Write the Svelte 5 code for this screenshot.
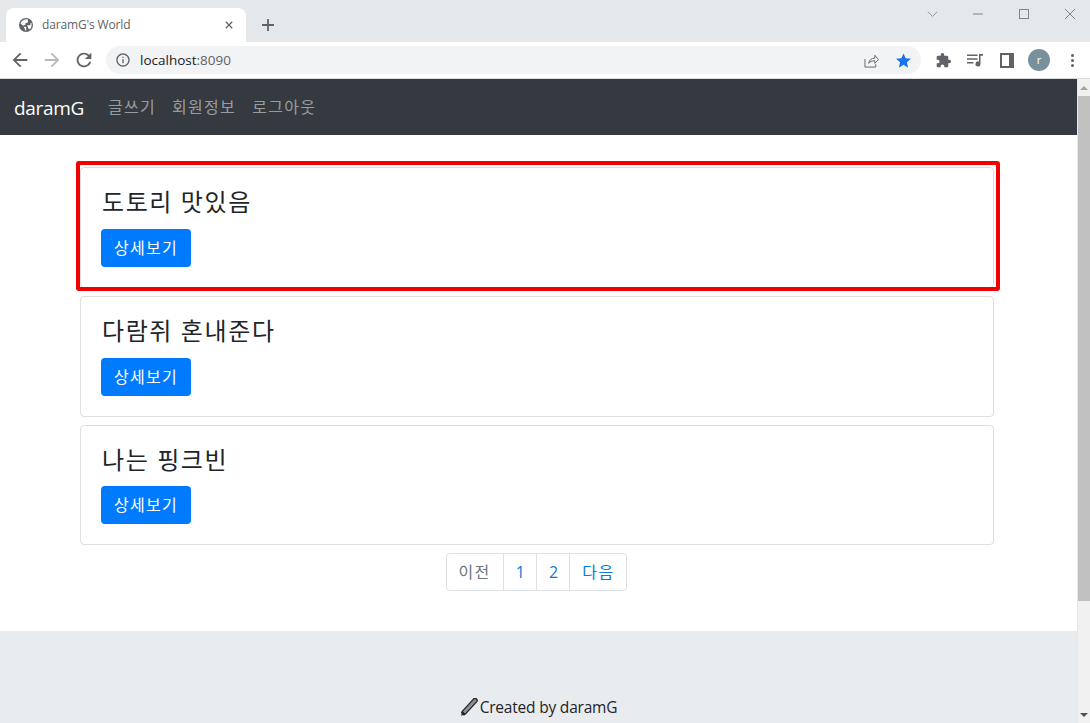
<script lang="ts">
	const posts = ['도토리 맛있음', '다람쥐 혼내준다', '나는 핑크빈'];
	const navLinks = ['글쓰기', '회원정보', '로그아웃'];
</script>

<div class="window">
	<header class="chrome">
		<div class="tabstrip">
			<div class="tab">
				<svg class="favicon" viewBox="0 0 14 14"><circle cx="7" cy="7" r="7" /><path class="land" d="M1.500 5.500L5 8.500v1c0 .6.500 1 1 1v2H7.200V9.500c0-.4-.3-.7-.7-.7H4.500V7h1.300c.4 0 .7-.3.7-.7V5h1.200c.7 0 1.200-.5 1.200-1.200V1.500C7 .9 3 1.500 1.500 5.500z" /><path class="land" d="M10.800 11.500c-.2-.6-.6-.9-1.200-.9H9V9c0-.4-.3-.7-.7-.7H8.200V7.200h2.500c.5 0 .8-.3.8-.8V5h1c.5 2.500-.2 5-1.700 6.500z" /></svg>
				<span class="tab-title">daramG's World</span>
				<svg class="tab-close" viewBox="0 0 10 10"><path d="M1 1l8 8M9 1l-8 8" /></svg>
			</div>
			<svg class="new-tab" viewBox="0 0 12 12"><path d="M6 0v12M0 6h12" /></svg>
			<div class="window-controls">
				<svg class="ctl chevron" viewBox="0 0 12 7"><path d="M.5.8L6 6.200 11.500.8" /></svg>
				<svg class="ctl minimize" viewBox="0 0 10 10"><path d="M0 5h10" /></svg>
				<svg class="ctl maximize" viewBox="0 0 10 10"><rect x=".5" y=".5" width="9" height="9" /></svg>
				<svg class="ctl closer" viewBox="0 0 10 10"><path d="M0 0l10 10M10 0L0 10" /></svg>
			</div>
		</div>
		<div class="toolbar">
			<svg class="tool back" viewBox="0 0 24 24"><path d="M20 11H7.830l5.590-5.590L12 4l-8 8 8 8 1.410-1.410L7.830 13H20v-2z" /></svg>
			<svg class="tool forward" viewBox="0 0 24 24"><path d="M4 11h12.170l-5.590-5.590L12 4l8 8-8 8-1.410-1.410L16.170 13H4v-2z" /></svg>
			<svg class="tool reload" viewBox="0 0 24 24"><path d="M17.650 6.350A7.958 7.958 0 0 0 12 4c-4.420 0-7.990 3.580-7.990 8s3.570 8 7.990 8c3.730 0 6.840-2.550 7.730-6h-2.080A5.990 5.990 0 0 1 12 18c-3.310 0-6-2.690-6-6s2.690-6 6-6c1.660 0 3.140.690 4.220 1.780L13 11h7V4l-2.350 2.350z" /></svg>
			<div class="omnibox">
				<svg class="info" viewBox="0 0 24 24"><path d="M11 7h2v2h-2zm0 4h2v6h-2zm1-9C6.480 2 2 6.480 2 12s4.480 10 10 10 10-4.480 10-10S17.520 2 12 2zm0 18c-4.410 0-8-3.590-8-8s3.590-8 8-8 8 3.590 8 8-3.590 8-8 8z" /></svg>
				<span class="url"><b>localhost</b>:8090</span>
				<svg class="share" viewBox="0 0 16 16"><path d="M1 6.500V15h11.500v-3M5 11c.5-3.500 3-5.500 6.500-5.500V2.500L15.500 7l-4 4V8.300C8.500 8.300 6.500 9 5 11z" /></svg>
				<svg class="star" viewBox="2 2 20 19"><path d="M12 17.270L18.180 21l-1.640-7.030L22 9.240l-7.190-.610L12 2 9.190 8.630 2 9.240l5.460 4.730L5.820 21z" /></svg>
			</div>
			<div class="extensions">
				<svg class="puzzle" viewBox="1 1 22 22"><path d="M20.500 11H19V7c0-1.100-.9-2-2-2h-4V3.500C13 2.120 11.880 1 10.500 1S8 2.120 8 3.500V5H4c-1.100 0-1.990.9-1.990 2v3.800H3.500c1.490 0 2.700 1.210 2.700 2.700s-1.210 2.700-2.700 2.700H2V20c0 1.100.9 2 2 2h3.800v-1.500c0-1.490 1.210-2.700 2.700-2.700 1.490 0 2.700 1.210 2.700 2.700V22H17c1.100 0 2-.9 2-2v-4h1.500c1.380 0 2.500-1.120 2.500-2.500S21.880 11 20.500 11z" /></svg>
				<svg class="playlist" viewBox="0 0 16 14"><path d="M0 1.500h10.500v1.400H0zM0 5.300h10.500v1.400H0zM0 9.100h6.500v1.400H0zM12 1h4v1.800h-2.500v8.200a2.500 2.500 0 1 1-1.500-2.300z" /></svg>
				<div class="side-panel"></div>
				<div class="avatar">r</div>
				<div class="kebab"><i></i><i></i><i></i></div>
			</div>
		</div>
	</header>

	<div class="viewport">
		<div class="page">
			<nav class="navbar">
				<a class="brand" href="#top">daramG</a>
				{#each navLinks as link}
					<a class="nav-link" href="#top">{link}</a>
				{/each}
			</nav>

			<main class="container">
				<div class="list">
					{#each posts as title}
						<article class="card">
							<h4>{title}</h4>
							<button>상세보기</button>
						</article>
					{/each}
				</div>
				<ul class="pagination">
					<li class="disabled">이전</li>
					<li class="num">1</li>
					<li class="num">2</li>
					<li>다음</li>
				</ul>
			</main>

			<footer>
				<svg class="pencil" viewBox="0 0 18 19">
					<path class="edge" d="M15 2.500L4 14.500" />
					<path class="body" d="M15 2.500L4 14.500" />
					<path class="tip" d="M2.800 13.200L5.300 15.700 1 18z" />
				</svg>
				<span>Created by daramG</span>
			</footer>
		</div>

		<div class="scrollbar">
			<div class="arrow up"></div>
			<div class="thumb"></div>
			<div class="arrow down"></div>
		</div>
	</div>

	<div class="highlight"></div>
</div>

<style>
	:global(body) {
		margin: 0;
		overflow: hidden;
	}

	.window {
		position: relative;
		width: 1090px;
		height: 723px;
		overflow: hidden;
		display: flex;
		flex-direction: column;
		font-family: 'Open Sans', 'Noto Sans CJK KR', sans-serif;
		color: #212529;
		background: #fff;
	}

	/* Browser frame */

	.chrome {
		flex: none;
		height: 79px;
		display: flex;
		flex-direction: column;
	}

	.tabstrip {
		height: 42px;
		background: #e5e8eb;
		display: flex;
		align-items: flex-end;
		padding-left: 6px;
	}

	.tab {
		width: 240px;
		height: 34px;
		box-sizing: border-box;
		background: #fff;
		border-radius: 8px 8px 0 0;
		display: flex;
		align-items: center;
		padding: 0 10px 1px 13px;
	}

	.favicon {
		width: 14px;
		height: 14px;
		fill: #5f6368;
		margin-right: 9px;
	}

	.favicon .land {
		fill: #fff;
	}

	.tab-title {
		flex: 1;
		font-size: 12px;
		letter-spacing: -0.15px;
		color: #5f6368;
		font-family: 'Open Sans', sans-serif;
	}

	.tab-close {
		width: 8px;
		height: 8px;
		fill: none;
		stroke: #5f6368;
		stroke-width: 1.6;
		margin-right: 3px;
	}

	.new-tab {
		width: 12px;
		height: 12px;
		fill: none;
		stroke: #5f6368;
		stroke-width: 1.8;
		margin: 0 0 11px 16px;
	}

	.window-controls {
		margin-left: auto;
		align-self: flex-start;
		display: flex;
		align-items: center;
		height: 28px;
		width: 165px;
		flex: none;
	}

	.ctl {
		fill: none;
		stroke: #80868b;
		stroke-width: 1;
		width: 10px;
		height: 10px;
		flex: none;
	}

	.chevron {
		width: 11px;
		height: 6px;
		margin-left: 2px;
	}

	.minimize {
		margin-left: 35px;
	}

	.maximize {
		margin-left: 36px;
	}

	.closer {
		margin-left: 36px;
	}

	.toolbar {
		height: 37px;
		background: #fff;
		border-bottom: 1px solid #dadce0;
		box-sizing: border-box;
		display: flex;
		align-items: center;
	}

	.tool {
		width: 22px;
		height: 22px;
		fill: #5f6368;
		flex: none;
		margin-left: 10px;
	}

	.tool.back {
		margin-left: 9px;
	}

	.tool.forward {
		fill: #b8babd;
	}

	.omnibox {
		width: 815px;
		height: 28px;
		margin-left: 11px;
		background: #f1f3f4;
		border-radius: 14px;
		display: flex;
		align-items: center;
		padding-left: 9px;
		box-sizing: border-box;
		flex: none;
	}

	.info {
		width: 16px;
		height: 16px;
		fill: #5f6368;
	}

	.url {
		margin-left: 9px;
		font-size: 13.5px;
		color: #5f6368;
		font-family: 'Open Sans', sans-serif;
	}

	.url b {
		font-weight: 400;
		color: #202124;
	}

	.share {
		width: 15px;
		height: 15px;
		margin-left: auto;
		fill: none;
		stroke: #5f6368;
		stroke-width: 1;
	}

	.star {
		width: 15px;
		height: 15px;
		fill: #1a73e8;
		margin: 0 10px 0 17px;
	}

	.extensions {
		display: flex;
		align-items: center;
		margin-left: 15px;
	}

	.puzzle {
		width: 15px;
		height: 15px;
		fill: #5f6368;
	}

	.playlist {
		width: 16px;
		height: 14px;
		fill: #5f6368;
		margin-left: 16px;
	}

	.side-panel {
		width: 14px;
		height: 15px;
		box-sizing: border-box;
		border: 2px solid #5f6368;
		border-right-width: 5px;
		margin-left: 17px;
	}

	.avatar {
		width: 22px;
		height: 22px;
		border-radius: 50%;
		background: #78909c;
		color: #fff;
		font-size: 11px;
		line-height: 21px;
		text-align: center;
		margin-left: 14px;
	}

	.kebab {
		display: flex;
		flex-direction: column;
		gap: 2px;
		margin-left: 21px;
	}

	.kebab i {
		width: 3px;
		height: 3px;
		border-radius: 50%;
		background: #5f6368;
	}

	/* Page */

	.viewport {
		flex: 1;
		min-height: 0;
		display: flex;
	}

	.page {
		flex: 1;
		min-width: 0;
		overflow: hidden;
	}

	.navbar {
		height: 56px;
		background: #343a40;
		display: flex;
		align-items: center;
		padding: 0 14px;
	}

	.navbar a {
		text-decoration: none;
	}

	.brand {
		color: #fff;
		font-size: 19px;
		letter-spacing: -0.3px;
		line-height: 30px;
		width: 70px;
		margin-top: 2px;
		margin-right: 16px;
	}

	.nav-link {
		color: rgba(255, 255, 255, 0.5);
		font-size: 16px;
		letter-spacing: 1.3px;
		line-height: 24px;
		padding: 0 8px;
	}

	.container {
		width: 914px;
		margin-left: 80px;
		padding-top: 32px;
	}

	.list {
		display: flex;
		flex-direction: column;
		gap: 8px;
	}

	.card {
		height: 120.8px;
		box-sizing: border-box;
		border: 1px solid rgba(0, 0, 0, 0.125);
		border-radius: 4px;
		padding: 20px;
	}

	.card h4 {
		margin: 0 0 13px 1px;
		font-size: 24px;
		font-weight: 400;
		letter-spacing: 1.6px;
		line-height: 27.8px;
	}

	.card button {
		display: block;
		width: 90px;
		height: 38px;
		padding: 0 0 2px;
		border: 0;
		border-radius: 4px;
		background: #007bff;
		color: #fff;
		font: inherit;
		font-size: 16px;
		letter-spacing: 1.3px;
	}

	.pagination {
		list-style: none;
		margin: 8px 0 0;
		padding: 0;
		display: flex;
		justify-content: center;
	}

	.pagination li {
		height: 38px;
		box-sizing: border-box;
		padding: 0 12px;
		border: 1px solid #dee2e6;
		margin-left: -1px;
		background: #fff;
		color: #0a7ad9;
		font-size: 16px;
		letter-spacing: 1.3px;
		line-height: 36px;
	}

	.pagination li.num {
		letter-spacing: -0.8px;
	}

	.pagination li:first-child {
		border-radius: 4px 0 0 4px;
	}

	.pagination li:last-child {
		border-radius: 0 4px 4px 0;
	}

	.pagination .disabled {
		color: #6c757d;
	}

	footer {
		margin-top: 40px;
		height: 200px;
		background: #e9ecef;
		display: flex;
		justify-content: center;
		align-items: flex-start;
		padding-top: 64px;
		gap: 2px;
		font-size: 15.5px;
		letter-spacing: -0.2px;
		line-height: 24px;
		color: #212529;
	}

	.pencil {
		width: 18px;
		height: 19px;
		margin-top: 3px;
		fill: none;
		stroke-linecap: round;
	}

	.pencil .edge {
		stroke: #212529;
		stroke-width: 5.5;
	}

	.pencil .body {
		stroke: #8a8f94;
		stroke-width: 3;
	}

	.pencil .tip {
		fill: #212529;
	}

	.scrollbar {
		flex: none;
		width: 13px;
		background: #f1f1f1;
		border-left: 1px solid #e8e8e8;
		box-sizing: border-box;
		display: flex;
		flex-direction: column;
	}

	.arrow {
		height: 17px;
		flex: none;
		display: flex;
		justify-content: center;
		align-items: center;
	}

	.arrow::before {
		content: '';
		border-left: 4px solid transparent;
		border-right: 4px solid transparent;
	}

	.arrow.up::before {
		border-bottom: 4px solid #a3a3a3;
	}

	.arrow.down {
		margin-top: auto;
	}

	.arrow.down::before {
		border-top: 4px solid #505050;
	}

	.thumb {
		height: 505px;
		background: #c1c1c1;
	}

	/* Red annotation drawn over the first card */

	.highlight {
		position: absolute;
		left: 76px;
		top: 161px;
		width: 924px;
		height: 130px;
		box-sizing: border-box;
		border: 4px solid #f00000;
		border-radius: 3px;
		pointer-events: none;
	}
</style>
